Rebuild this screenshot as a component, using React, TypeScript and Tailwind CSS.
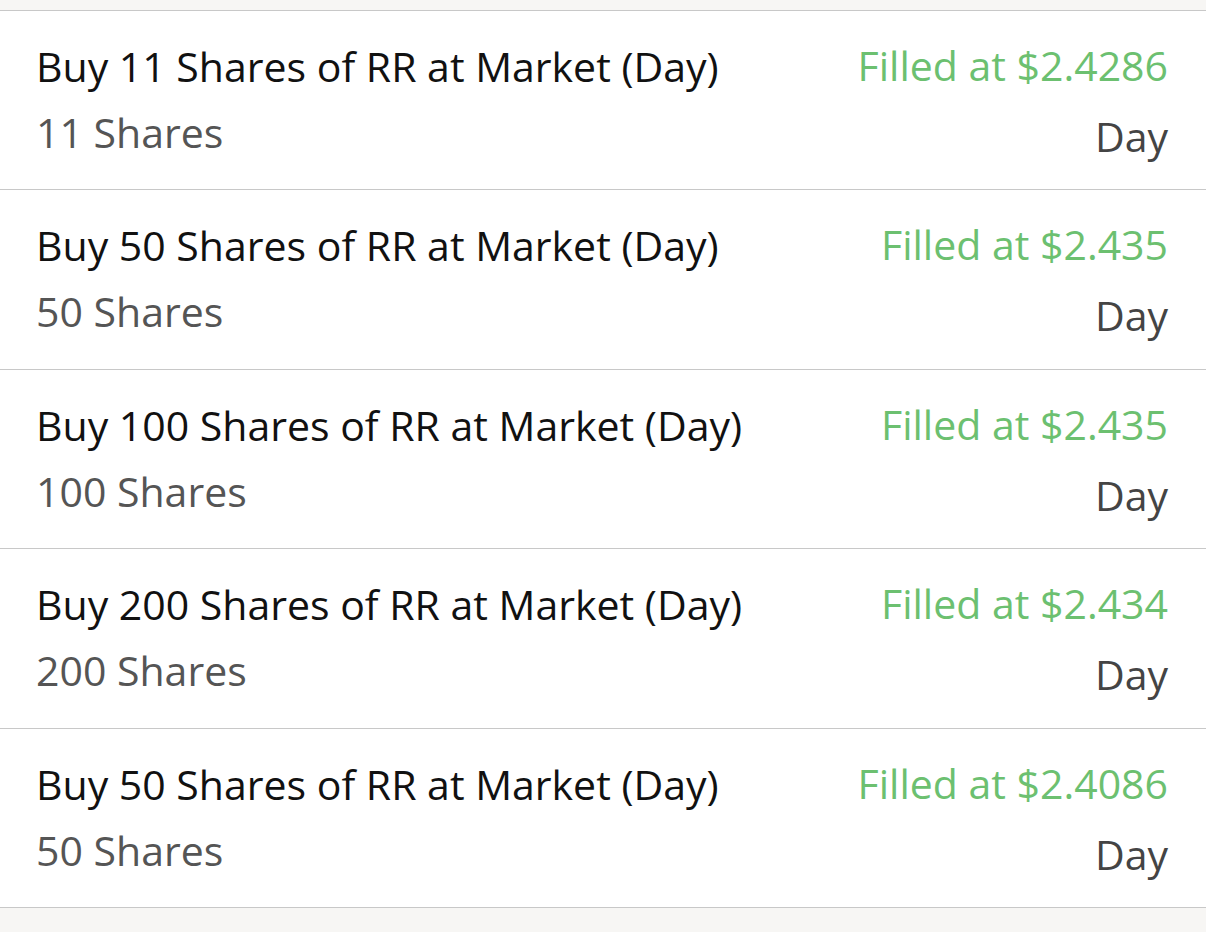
const orders = [
  { qty: 11, price: "$2.4286" },
  { qty: 50, price: "$2.435" },
  { qty: 100, price: "$2.435" },
  { qty: 200, price: "$2.434" },
  { qty: 50, price: "$2.4086" },
];

function OrderRow({ qty, price }: { qty: number; price: string }) {
  return (
    <div className="h-[179.4px] border-b border-[#c8c8c8] bg-white flex justify-between pl-[36px] pr-[38px]">
      <div className="flex flex-col">
        <div className="pt-[31px] text-[41px] leading-[48px] text-[#111111]">
          Buy {qty} Shares of RR at Market (Day)
        </div>
        <div className="mt-[18px] text-[41px] leading-[48px] text-[#555555]">{qty} Shares</div>
      </div>
      <div className="flex flex-col items-end">
        <div className="pt-[30px] text-[41px] leading-[48px] text-[#6cc070]">Filled at {price}</div>
        <div className="mt-[23px] text-[41px] leading-[48px] text-[#444444]">Day</div>
      </div>
    </div>
  );
}

export default function App() {
  return (
    <div className="min-h-[932px] bg-[#f7f6f4] font-['Open_Sans',sans-serif]">
      <div className="h-[10px]" />
      <div className="border-t border-[#c8c8c8]">
        {orders.map((o, i) => (
          <OrderRow key={i} qty={o.qty} price={o.price} />
        ))}
      </div>
    </div>
  );
}
